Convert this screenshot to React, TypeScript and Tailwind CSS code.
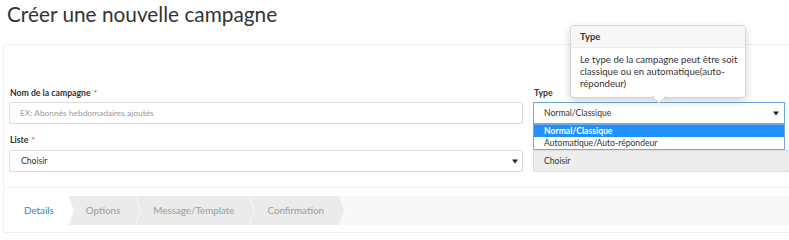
import React from 'react';

function Caret() {
  return (
    <svg width="6" height="5" viewBox="0 0 6 5" className="shrink-0">
      <path d="M0 0.5 H6 L3 4.5 Z" fill="#222" />
    </svg>
  );
}

function Label({ text, required }: { text: string; required?: boolean }) {
  return (
    <div className="h-[14px] pl-[1px] text-[8.7px] leading-[14px] font-bold text-[#333]">
      {text}
      {required && <span className="ml-[3px] text-[8px] text-[#e2474c] align-top">*</span>}
    </div>
  );
}

function Separator({ from, to }: { from: string; to: string }) {
  return (
    <svg width="6" height="29" viewBox="0 0 6 29" className="shrink-0 block">
      <rect x="0" y="0" width="6" height="29" fill={to} />
      <polygon points="0,0 0.5,0 5.5,14.5 0.5,29 0,29" fill={from} />
      <polyline points="0.5,0 5.5,14.5 0.5,29" fill="none" stroke="#fafafa" strokeWidth="1" />
    </svg>
  );
}

const steps = ['Details', 'Options', 'Message/Template', 'Confirmation'];

function App() {
  return (
    <div className="relative w-[789px] h-[240px] overflow-hidden bg-white text-[#333] font-['Lato','Liberation_Sans',sans-serif]">
      <h1 className="pl-[7px] text-[20.8px] leading-[28px] font-normal text-[#333]">
        Créer une nouvelle campagne
      </h1>

      <div className="mt-[16px] ml-[3px] w-[800px] rounded-[3px] border border-[#efefef] pl-[5px] pt-[41px] pb-[15px]">
        <div className="flex gap-[10px]">
          <div className="w-[514px] flex flex-col">
            <Label text="Nom de la campagne" required />
            <div className="mt-[2px] h-[22px] rounded-[2px] border border-[#dcdcdc] px-[10px] flex items-center text-[8.4px] text-[#9a9a9a]">
              EX: Abonnés hebdomadaires ajoutés
            </div>
            <div className="mt-[9px]">
              <Label text="Liste" required />
            </div>
            <div className="mt-[3px] h-[22px] rounded-[2px] border border-[#dcdcdc] pl-[11px] pr-[4px] flex items-center justify-between text-[8.6px] text-[#333]">
              <span>Choisir</span>
              <Caret />
            </div>
          </div>

          <div className="flex-1 flex flex-col">
            <Label text="Type" />
            <div className="relative mt-[2px] w-[252px]">
              <div className="h-[22px] border border-[#6aa6dc] pl-[10px] pr-[5px] flex items-center justify-between text-[8.6px] text-[#333]">
                <span>Normal/Classique</span>
                <Caret />
              </div>
              <div className="absolute left-0 top-full w-full border border-[#7fa9d4] bg-white text-[8.6px] leading-[12px]">
                <div className="h-[12px] bg-[#1e90ff] pl-[10px] text-white font-bold">Normal/Classique</div>
                <div className="h-[12px] pl-[10px] text-[#333]">Automatique/Auto-répondeur</div>
              </div>
            </div>
            <div className="mt-[26px] h-[22px] w-[257px] rounded-[2px] border border-[#dcdcdc] bg-[#ededed] pl-[10px] flex items-center text-[8.6px] text-[#333]">
              Choisir
            </div>
          </div>
        </div>
      </div>

      <div className="ml-[3px] w-[800px] rounded-b-[3px] border border-t-0 border-[#efefef] pl-[6px] pt-[8px] pb-[7px]">
        <div className="flex h-[29px] bg-[#f8f8f8] text-[9.8px] leading-[29px]">
          {steps.map((s, i) => {
            const bg = i === 0 ? '#ffffff' : '#ebebeb';
            const next = i === steps.length - 1 ? '#f8f8f8' : '#ebebeb';
            return (
              <React.Fragment key={s}>
                <div
                  className={
                    i === 0
                      ? 'pl-[14px] pr-[14px] bg-white text-[#3d7fb6] rounded-l-[3px]'
                      : 'pl-[12px] pr-[15px] bg-[#ebebeb] text-[#9b9b9b]'
                  }
                >
                  {s}
                </div>
                <Separator from={bg} to={next} />
              </React.Fragment>
            );
          })}
        </div>
      </div>

      <div className="absolute left-[570px] top-[25px] w-[176px] rounded-[4px] border border-[#d6d6d6] bg-white shadow-[0_3px_8px_rgba(0,0,0,0.18)]">
        <div className="h-[22px] rounded-t-[4px] border-b border-[#ebebeb] bg-[#f7f7f7] pl-[9px] text-[9.5px] leading-[22px] font-bold text-[#333]">
          Type
        </div>
        <div className="px-[9px] pt-[6px] pb-[7px] text-[9.6px] leading-[12px] text-[#333] whitespace-nowrap">
          Le type de la campagne peut être soit
          <br />
          classique ou en automatique(auto-
          <br />
          répondeur)
        </div>
        <svg width="14" height="7" viewBox="0 0 14 7" className="absolute left-[81px] top-full -mt-[1px]">
          <path d="M0 0 L7 7 L14 0 Z" fill="#fff" />
          <path d="M0 0 L7 7 L14 0" fill="none" stroke="#d6d6d6" strokeWidth="1" />
        </svg>
      </div>
    </div>
  );
}

export default App;
